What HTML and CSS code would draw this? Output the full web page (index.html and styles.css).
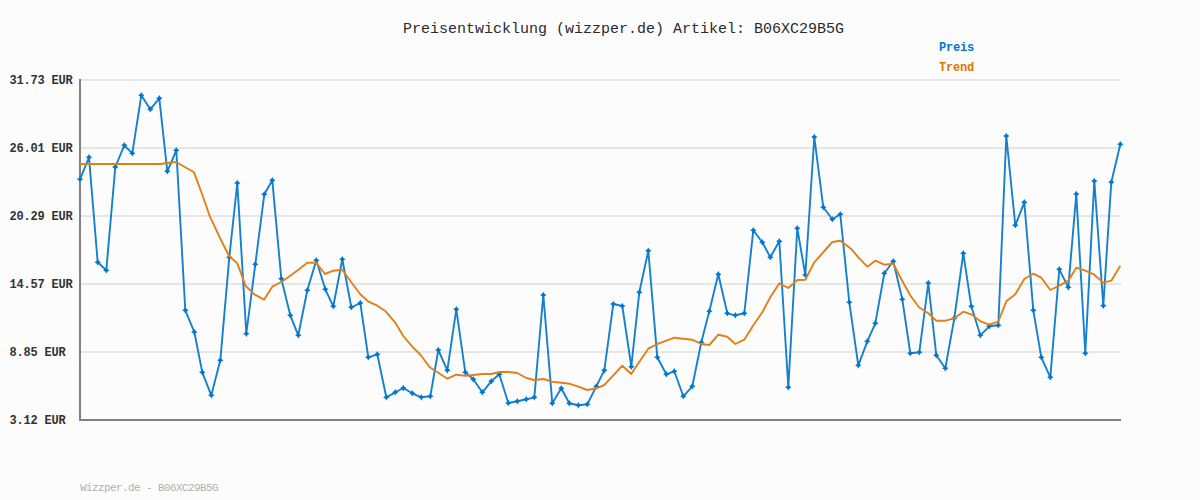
FILE: index.html
```html
<!DOCTYPE html>
<html lang="de">
<head>
<meta charset="utf-8">
<title>Preisentwicklung</title>
<link rel="stylesheet" href="styles.css">
</head>
<body>
<svg class="chart" width="1200" height="500" viewBox="0 0 1200 500" role="img" aria-label="Preisentwicklung">
  <defs>
    <marker id="dot" markerUnits="userSpaceOnUse" markerWidth="8" markerHeight="8" refX="4" refY="4" viewBox="0 0 8 8">
      <path class="dot" d="M4 .8L5.2 2.8L7.2 4L5.2 5.2L4 7.2L2.8 5.2L.8 4L2.8 2.8Z"/>
    </marker>
  </defs>
  <text class="title" x="403" y="33">Preisentwicklung (wizzper.de) Artikel: B06XC29B5G</text>
  <text class="legend legend-price" x="939" y="51">Preis</text>
  <text class="legend legend-trend" x="939" y="71">Trend</text>
  <g class="grid">
    <line x1="80" x2="1121" y1="80" y2="80"/>
    <line x1="80" x2="1121" y1="148" y2="148"/>
    <line x1="80" x2="1121" y1="216" y2="216"/>
    <line x1="80" x2="1121" y1="284" y2="284"/>
    <line x1="80" x2="1121" y1="352" y2="352"/>
  </g>
  <path class="axis" d="M80 79V420H1121"/>
  <g class="ticks">
    <text x="9.5" y="84">31.73 EUR</text>
    <text x="9.5" y="152">26.01 EUR</text>
    <text x="9.5" y="220">20.29 EUR</text>
    <text x="9.5" y="288">14.57 EUR</text>
    <text x="9.5" y="356">8.85 EUR</text>
    <text x="9.5" y="424">3.12 EUR</text>
  </g>
  <polyline class="price" marker-start="url(#dot)" marker-mid="url(#dot)" marker-end="url(#dot)" points="80,179.3 89,157.3 97.7,262.3 106.3,270.3 115.3,167 124.3,145.3 132.3,153.3 141.3,95.3 150.3,109.3 159.3,98.3 167.3,171.3 176.3,150.3 185.3,310.3 194.3,332 202.3,372.3 211.3,395.3 220.3,360.3 229.3,257.3 237.3,183 246.3,333.7 255.3,264.3 264.3,194.3 272.3,180.3 281.3,278.7 290.3,315.3 298.3,335.3 307.3,290.3 316.3,260.3 325.3,289.3 333.3,306.3 342.3,259.3 351.3,307.3 360.3,303 368.3,357.3 377.3,354.3 386.3,397.3 395.3,392.3 403.3,388 412.3,393.3 421.3,397.3 430.3,396.3 438.3,350 447.3,370.3 456.3,309.3 465.3,372.3 473.3,379.3 482.3,392.3 491.3,381.3 499.3,374.3 508.3,403 517.3,401.3 526.3,399.3 534.3,397.3 543.3,295 552.3,403.3 561.3,388.3 569.3,403.3 578.3,405.3 587.3,404.3 596.3,386.3 604.3,370.3 613.3,304 622.3,306 631.3,366.7 639.3,292.3 648.3,250.7 657.3,357.3 666.3,374.3 674.3,371.3 683.3,396.3 692.3,386.3 701.3,342.3 709.3,311.3 718.3,274.3 727.3,313.3 735.3,315.3 744.3,313.3 753.3,230.3 762.3,242.3 770.3,257.3 779.3,241.3 788.3,387.3 797.3,228.3 805.3,275 814.3,137 823.3,207.3 832.3,219.3 840.3,214.3 849.3,302.3 858.3,365.3 867.3,341.3 875.3,323.3 884.3,273.3 893.3,261.3 902.3,299.3 910.3,353.3 919.3,352.3 928.3,283 936.3,355.3 945.3,368.3 954.3,318.3 963.3,253.3 971.3,306.3 980.3,335.3 989.3,326.3 998.3,325.3 1006.3,136 1015.3,225.3 1024.3,202.3 1033.3,310.3 1041.3,357.3 1050.3,377.3 1059.3,269.3 1068.3,287.3 1076.3,194 1085.3,353.3 1094.3,181 1103.3,305.7 1111.3,182.3 1120.3,144.3"/>
  <polyline class="trend" points="80,164 160,164 176,162 194,172.3 202,194 210,216.7 220,238 229,256 237.3,263.3 245.7,286 254.3,294.3 264,299.7 272.3,286.7 281.3,282 290,276 299,269.3 307.3,262.7 316,262.7 325,274 333.3,270.7 342.3,269.7 351.3,282.3 360.3,294.3 368,301.3 377.3,305.7 385.7,311.3 395,322.3 403.3,336 412.3,346.7 420.7,355 429.7,367.3 438.3,372.7 447.3,378.7 456.3,374.7 465.3,375.7 473.3,375 482.3,374 491.3,374 499.3,372 508.3,372 517.3,373 526.3,378 534.3,380 543.3,379 552.3,381.7 561.3,382.7 569.3,383.7 578.3,386.7 587.3,390 596.3,388.3 604.3,385 613.3,375.3 622.3,365.7 631.3,374 639.3,361.7 648.3,348.7 657.3,344 666.3,340.7 674.3,337.7 683.3,338.7 692.3,339.7 701.3,344 709.3,345 718.3,334.7 727.3,336.7 735.3,344 744.3,339.7 753.3,325.3 762.3,312.3 770.3,297.3 779.3,283.3 788.3,288 797.3,280 805.3,279.7 814.3,262.3 825.3,250 832.3,242 840.3,240.7 851.7,249.3 858.3,257.3 867.3,266.7 875.3,260.7 884.3,264.7 893.3,263.7 900,276.7 910,295 919,307.3 928.3,313.3 936.3,320.7 945.3,320.7 954.3,318.3 963.3,311.7 971.3,314.3 980.3,321.3 989.3,324.7 998.3,321.7 1006.3,301.3 1015.3,294.3 1024.3,279 1033.3,273.7 1041.3,277.7 1050.3,290 1059.3,285.7 1068.3,280.7 1076.3,267.7 1085.3,270.7 1094.3,274.7 1103.3,282.7 1111.3,280.7 1120.3,265.7"/>
  <text class="footer" x="80" y="491">Wizzper.de - B06XC29B5G</text>
</svg>
</body>
</html>
```

FILE: styles.css
```css
html, body {
  margin: 0;
  padding: 0;
  background: #fcfcfc;
}

.chart {
  display: block;
  font-family: "Liberation Mono", "Courier New", monospace;
}

.title {
  font-size: 15px;
  fill: #2b2b2b;
}

.legend {
  font-size: 12px;
  font-weight: 700;
  letter-spacing: -0.2px;
}

.legend-price {
  fill: #0077cc;
}

.legend-trend {
  fill: #dd7700;
}

.grid line {
  stroke: #e6e6e6;
  stroke-width: 2;
}

.axis {
  fill: none;
  stroke: #808080;
  stroke-width: 2;
}

.ticks text {
  font-size: 12px;
  font-weight: 700;
  letter-spacing: -0.2px;
  fill: #333333;
}

.price,
.trend {
  fill: none;
  stroke-linejoin: round;
  stroke-width: 1.9;
}

.price {
  stroke: #1580ce;
}

.dot {
  fill: #0077cc;
}

.trend {
  stroke: #e1801a;
}

.footer {
  font-size: 11px;
  letter-spacing: -0.6px;
  fill: #b0b0b0;
}
```
